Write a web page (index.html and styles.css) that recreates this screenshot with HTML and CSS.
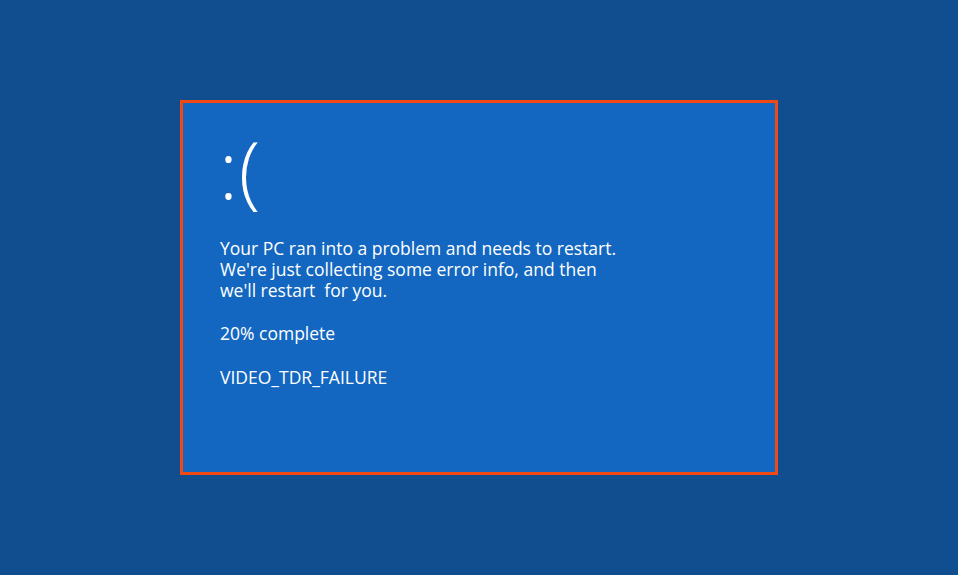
FILE: index.html
```html
<!DOCTYPE html>
<html lang="en">
<head>
<meta charset="utf-8">
<title>Blue Screen</title>
<link rel="stylesheet" href="styles.css">
</head>
<body>
<main class="stage">
  <section class="bsod">
    <div class="face">:(</div>
    <div class="msg">
      <span class="line">Your PC ran into a problem and needs to restart.</span>
      <span class="line">We're just collecting some error info, and then</span>
      <span class="line">we'll restart&nbsp; for you.</span>
    </div>
    <p class="progress">20% complete</p>
    <p class="code">VIDEO_TDR_FAILURE</p>
  </section>
</main>
</body>
</html>
```

FILE: styles.css
```css
html, body {
  margin: 0;
  padding: 0;
  height: 100%;
}
body {
  background: #104e8f;
  font-family: "Open Sans", "Noto Sans", "Liberation Sans", sans-serif;
  color: #ffffff;
}
.stage {
  height: 100vh;
  display: flex;
  align-items: center;
  justify-content: center;
}
.bsod {
  box-sizing: border-box;
  width: 598px;
  height: 375px;
  border: 3px solid #f04a14;
  background: #1367c1;
  padding: 27px 37px 0 37px;
}
.face {
  font-size: 79px;
  font-weight: 300;
  line-height: 78px;
  margin: 0 0 0 -1px;
  letter-spacing: 1px;
}
.msg, .progress, .code {
  margin: 0;
  font-size: 17.5px;
  line-height: 21px;
}
.line {
  display: block;
  height: 21px;
}
.msg { margin-top: 30px; }
.progress { margin-top: 22px; }
.code { margin-top: 23px; }
```
